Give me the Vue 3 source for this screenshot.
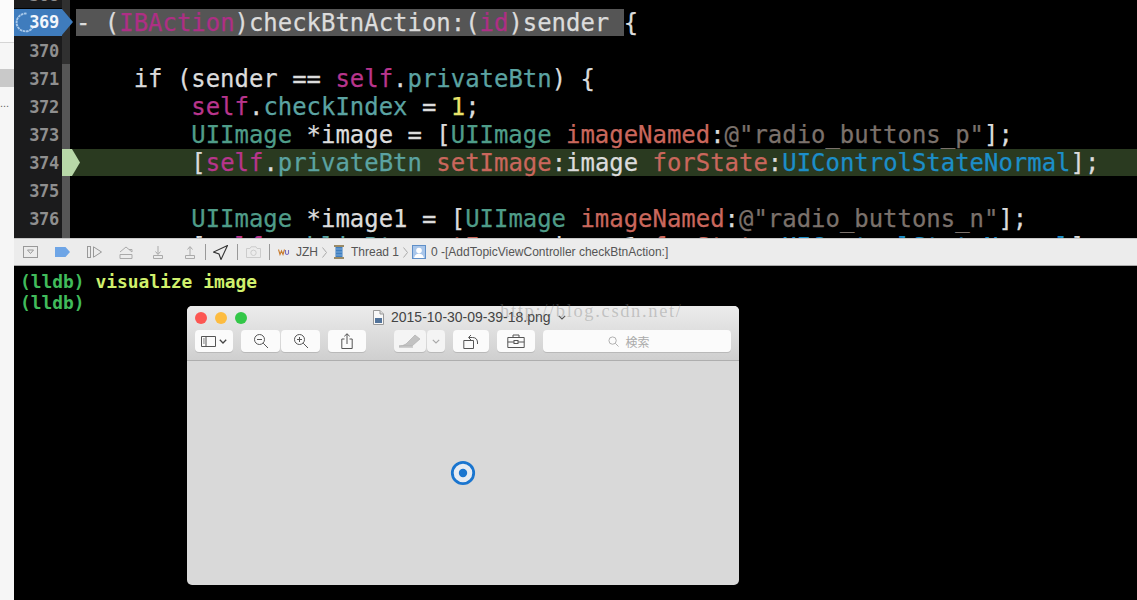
<script setup>
const plain = 'p', self = 's', prop = 't', cls = 'c', meth = 'm', str = 'g', kw = 'k', num = 'n', cnst = 'b'
const lines = [
  { no: 368, code: [] },
  { no: 369, sel: true, code: [[plain, '- ('], [kw, 'IBAction'], [plain, ')checkBtnAction:('], [kw, 'id'], [plain, ')sender ']], tail: '{' },
  { no: 370, code: [] },
  { no: 371, code: [[plain, '    if (sender == '], [self, 'self'], [plain, '.'], [prop, 'privateBtn'], [plain, ') {']] },
  { no: 372, code: [[plain, '        '], [self, 'self'], [plain, '.'], [prop, 'checkIndex'], [plain, ' = '], [num, '1'], [plain, ';']] },
  { no: 373, code: [[plain, '        '], [cls, 'UIImage'], [plain, ' *image = ['], [cls, 'UIImage'], [plain, ' '], [meth, 'imageNamed'], [plain, ':'], [str, '@"radio_buttons_p"'], [plain, '];']] },
  { no: 374, cur: true, code: [[plain, '        ['], [self, 'self'], [plain, '.'], [prop, 'privateBtn'], [plain, ' '], [meth, 'setImage'], [plain, ':image '], [meth, 'forState'], [plain, ':'], [cnst, 'UIControlStateNormal'], [plain, '];']] },
  { no: 375, code: [] },
  { no: 376, code: [[plain, '        '], [cls, 'UIImage'], [plain, ' *image1 = ['], [cls, 'UIImage'], [plain, ' '], [meth, 'imageNamed'], [plain, ':'], [str, '@"radio_buttons_n"'], [plain, '];']] },
  { no: 377, code: [[plain, '        ['], [self, 'self'], [plain, '.'], [prop, 'publicBtn'], [plain, ' '], [meth, 'setImage'], [plain, ':image1 '], [meth, 'forState'], [plain, ':'], [cnst, 'UIControlStateNormal'], [plain, '];']] }
]
</script>

<template>
  <div class="root">
    <aside class="nav">
      <div class="nav-a"></div>
      <div class="nav-b"></div>
      <div class="nav-sel"></div>
      <div class="nav-dots">...</div>
    </aside>
    <main class="main">
      <section class="editor">
        <div class="scroller">
          <div v-for="l in lines" :key="l.no" class="row" :class="{ cur: l.cur }">
            <div class="no" :class="{ bp: l.no === 369 }">
              <svg v-if="l.no === 369" class="spin" viewBox="0 0 20 20"><path d="M11 1.500A8.500 8.500 0 1 0 17.500 14" fill="none" stroke="#a9c9ea" stroke-width="1.800" stroke-dasharray="2.500 .6"/></svg>
              <span class="num">{{ l.no }}</span>
            </div>
            <div class="strip" :class="{ dark: l.no <= 370 }">
              <svg v-if="l.cur" class="pc" viewBox="0 0 18 28"><path d="M0 1H10L18 14.500L10 28H0Z" fill="#b8d8a8"/></svg>
            </div>
            <pre class="code"><span :class="{ selbg: l.sel }"><span v-for="(t, i) in l.code" :key="i" :class="t[0]">{{ t[1] }}</span></span><span v-if="l.tail" class="p">{{ l.tail }}</span></pre>
          </div>
        </div>
      </section>

      <nav class="bar">
        <svg class="ic w15" viewBox="0 0 15 12"><rect x=".5" y=".5" width="14" height="11" fill="none" stroke="#999"/><path d="M4.500 4h6L7.500 7.500Z" fill="none" stroke="#999"/></svg>
        <svg class="ic w15 g17" viewBox="0 0 15 10"><path d="M0 0H10.500L15 5L10.500 10H0Z" fill="#6ea5e6"/></svg>
        <svg class="ic w15 g17" viewBox="0 0 15 12"><rect x=".5" y=".5" width="3" height="11" fill="none" stroke="#999"/><path d="M6.500 .8L14.500 6L6.500 11.200Z" fill="none" stroke="#999"/></svg>
        <svg class="ic w14 g17" viewBox="0 0 14 13"><path d="M1 6L7 1L13 6M1 8.500H13V12.500H1ZM10 3.500H13V6" fill="none" stroke="#aaa"/></svg>
        <svg class="ic w14 g18" viewBox="0 0 14 13"><path d="M7 0V8M4.500 5.500L7 8.500L9.500 5.500M2.500 9.500H11.500V12.500H2.500Z" fill="none" stroke="#aaa"/></svg>
        <svg class="ic w14 g18" viewBox="0 0 14 13"><path d="M7 9V1M4.500 3.500L7 .5L9.500 3.500M2.500 9.500H11.500V12.500H2.500Z" fill="none" stroke="#aaa"/></svg>
        <i class="sep m8"></i>
        <svg class="ic w15 m7" viewBox="0 0 15 15"><path d="M14.500 .5L.5 7L6 9L8 14.500Z" fill="none" stroke="#333" stroke-width="1.100"/></svg>
        <i class="sep m9"></i>
        <svg class="ic w15 m8" viewBox="0 0 15 12"><path d="M.5 2.500H4L5 .8H10L11 2.500H14.500V11.500H.5Z" fill="none" stroke="#ccc"/><circle cx="7.500" cy="6.800" r="2.700" fill="none" stroke="#ccc"/></svg>
        <i class="sep m8"></i>
        <svg class="ic w12 m8" viewBox="0 0 12 8"><path d="M.5 1.500L2 6.500L3.500 3L5 6.500L6.500 1.500" fill="none" stroke="#c77a2c" stroke-width="1.100"/><path d="M7.500 2V5.500Q9 7.500 10.500 5.500V2" fill="none" stroke="#7a6fc0" stroke-width="1.100"/></svg>
        <span class="crumb m6">JZH</span>
        <svg class="chev m4" viewBox="0 0 5 11"><path d="M.5 .5L4.500 5.500L.5 10.500" fill="none" stroke="#aaa"/></svg>
        <svg class="ic w12 m6" viewBox="0 0 12 14"><rect x="2.500" y="1.500" width="7" height="11" fill="#3f7fc0"/><path d="M1 1H11M1 13H11" stroke="#9a8a66" stroke-width="2"/><path d="M2.500 4H9.500M2.500 7H9.500M2.500 10H9.500" stroke="#8db6e0" stroke-width=".8"/></svg>
        <span class="crumb m6">Thread 1</span>
        <svg class="chev m4" viewBox="0 0 5 11"><path d="M.5 .5L4.500 5.500L.5 10.500" fill="none" stroke="#aaa"/></svg>
        <svg class="ic w14 m4" viewBox="0 0 14 14"><rect x=".5" y=".5" width="13" height="13" fill="#a9c6ea" stroke="#5f8fc8"/><circle cx="7" cy="5.500" r="2.800" fill="#fff"/><path d="M2 13Q3 8.500 7 8.500T12 13Z" fill="#fff"/></svg>
        <span class="crumb m5">0 -[AddTopicViewController checkBtnAction:]</span>
      </nav>

      <section class="console">
        <div><span class="lldb">(lldb)</span> <span class="cmd">visualize image</span></div>
        <div><span class="lldb">(lldb)</span></div>

        <div class="window">
          <header class="chrome">
            <div class="title-row">
              <div class="lights"><i class="red"></i><i class="amber"></i><i class="green"></i></div>
              <div class="title">
                <svg class="doc" viewBox="0 0 11 15"><path d="M.5 .5H7L10.500 4V14.500H.5Z" fill="#f8f8f8" stroke="#999"/><path d="M7 .5V4H10.500" fill="#ddd" stroke="#999"/><rect x="2" y="8" width="7" height="5" fill="#52739a"/></svg>
                <span>2015-10-30-09-39-18.png</span>
                <svg class="caret" viewBox="0 0 8 5"><path d="M.8 .8L4 4L7.200 .8" fill="none" stroke="#555" stroke-width="1.100"/></svg>
              </div>
            </div>
            <div class="tools">
              <button class="btn b-side">
                <svg viewBox="0 0 15 11" width="15" height="11"><path d="M.5 .5H14.500V10.500H.5ZM5 .5V10.500" fill="none" stroke="#555"/><path d="M2 3H3.800M2 5H3.800M2 7H3.800" stroke="#777"/></svg>
                <svg viewBox="0 0 8 5" width="8" height="5"><path d="M.8 .8L4 4L7.200 .8" fill="none" stroke="#444" stroke-width="1.300"/></svg>
              </button>
              <div class="joined">
                <button class="btn b-zoom">
                  <svg viewBox="0 0 16 16" width="16" height="16"><circle cx="6.500" cy="6.500" r="5" fill="none" stroke="#555"/><path d="M4 6.500H9M10.200 10.200L15 15" stroke="#555" fill="none"/></svg>
                </button>
                <button class="btn b-zoom">
                  <svg viewBox="0 0 16 16" width="16" height="16"><circle cx="6.500" cy="6.500" r="5" fill="none" stroke="#555"/><path d="M4 6.500H9M6.500 4V9M10.200 10.200L15 15" stroke="#555" fill="none"/></svg>
                </button>
              </div>
              <button class="btn b-share">
                <svg viewBox="0 0 12 16" width="12" height="16"><path d="M3.500 6H.8V15.500H11.200V6H8.500M6 11V.8M3.300 3.300L6 .8L8.700 3.300" fill="none" stroke="#555"/></svg>
              </button>
              <div class="markup">
                <button class="btn b-pen">
                  <svg viewBox="0 0 24 14" width="24" height="14"><path d="M8 10L17 1L22 5L14 12H1Q5 12 8 10Z" fill="#c2c2c2" stroke="#aaa" stroke-width=".6"/><path d="M1 13H15" stroke="#aaa"/></svg>
                </button>
                <button class="btn b-more">
                  <svg viewBox="0 0 8 5" width="8" height="5"><path d="M.8 .8L4 4L7.200 .8" fill="none" stroke="#aaa" stroke-width="1.200"/></svg>
                </button>
              </div>
              <button class="btn b-rot">
                <svg viewBox="0 0 16 16" width="16" height="16"><path d="M.8 7.500H10.500V15.500H.8Z" fill="none" stroke="#555"/><path d="M6 4.500H9.500Q14 4.500 14.500 9V11M8 2L5.500 4.500L8 7" fill="none" stroke="#555"/></svg>
              </button>
              <button class="btn b-box">
                <svg viewBox="0 0 18 14" width="18" height="14"><path d="M.8 3.500H17.200V13.500H.8ZM.8 8H7M11 8H17.200M6 3.500V1H12V3.500" fill="none" stroke="#555"/><rect x="7" y="6.500" width="4" height="3" fill="none" stroke="#555"/></svg>
              </button>
              <div class="search">
                <svg viewBox="0 0 12 12" width="11" height="11"><circle cx="5" cy="5" r="4" fill="none" stroke="#aaa"/><path d="M8 8L11.500 11.500" stroke="#aaa"/></svg>
                <span>検索</span>
              </div>
            </div>
          </header>
          <div class="canvas">
            <svg viewBox="0 0 26 26" width="26" height="26">
              <circle cx="13" cy="13" r="10.700" fill="#e6ebf2" stroke="#1a75cf" stroke-width="2.800"/>
              <circle cx="13" cy="13" r="4.200" fill="#1a75cf"/>
            </svg>
          </div>
        </div>
        <div class="mark">http://blog.csdn.net/</div>
      </section>
    </main>
  </div>
</template>

<style>
html, body { margin: 0; background: #000; }
</style>

<style scoped>
.root { display: flex; width: 1137px; height: 600px; overflow: hidden; background: #000; }
.nav { width: 14px; flex: none; background: #f6f6f6; display: flex; flex-direction: column; }
.nav-a { height: 42px; background: #fbfbfb; border-bottom: 1px solid #d5d5d5; }
.nav-b { height: 26px; }
.nav-sel { height: 18px; background: #c9c9c9; }
.nav-dots { margin-top: 6px; font: 11px/20px "Liberation Sans", sans-serif; color: #666; }
.main { flex: 1; min-width: 0; display: flex; flex-direction: column; }
.editor { height: 238px; flex: none; overflow: hidden; }
.scroller { margin-top: -20px; }
.row { display: flex; height: 28px; }
.row.cur { background: linear-gradient(#2a3a20, #2a3a20) no-repeat 56px 1px / 100% 27px; }
.no { width: 48px; flex: none; position: relative; background: #1b1b1c; font: 700 17px/28px "DejaVu Sans Mono", monospace; color: #8f8f8f; text-align: right; box-sizing: border-box; padding: 1px 3px 0 0; }
.num { position: relative; letter-spacing: -.3px; }
.no.bp { background: #3f7cbd; color: #f2f6fb; height: 27px; margin-top: 1px; padding-top: 0; line-height: 27px; }
.no.bp::after { content: ""; position: absolute; left: 48px; top: 0; border-left: 11px solid #3f7cbd; border-top: 13.500px solid transparent; border-bottom: 13.500px solid transparent; z-index: 2; }
.spin { position: absolute; left: 1px; top: 3px; width: 21px; height: 21px; }
.strip { width: 8px; flex: none; background: #565656; position: relative; }
.strip.dark { background: #303030; }
.pc { position: absolute; left: 0; top: 0; width: 18px; height: 28px; z-index: 1; }
.code { margin: 0 0 0 6px; padding-top: 1px; font: 23.950px/28px "DejaVu Sans Mono", monospace; white-space: pre; color: #dcdcdc; -webkit-text-stroke: .25px; }
.selbg { background: #555; display: inline-block; height: 27px; }
.p { color: #dcdcdc; }
.s { color: #b8358c; }
.t { color: #5ba3a2; }
.c { color: #4f9c88; }
.m { color: #c9675c; }
.g { color: #7b716b; }
.k { color: #ae2f85; }
.n { color: #e9e36a; }
.b { color: #1c8ec9; }

.bar { height: 28px; flex: none; box-sizing: border-box; display: flex; align-items: center; padding-left: 9px; background: #ececec; border-top: 1px solid #c8c8c8; border-bottom: 1px solid #a9a9a9; }
.ic { flex: none; display: block; }
.w15 { width: 15px; }
.w14 { width: 14px; }
.w12 { width: 12px; }
.g17 { margin-left: 17px; }
.g18 { margin-left: 18px; }
.m4 { margin-left: 4px; }
.m5 { margin-left: 5px; }
.m6 { margin-left: 6px; }
.m7 { margin-left: 7px; }
.m8 { margin-left: 8px; }
.m9 { margin-left: 9px; }
.sep { display: block; width: 1px; height: 16px; background: #999; flex: none; }
.crumb { font: 12px "Liberation Sans", sans-serif; color: #555; white-space: pre; flex: none; }
.chev { width: 5px; height: 11px; flex: none; }

.console { flex: 1; position: relative; padding: 5px 0 0 6px; font: 700 17.900px/21px "DejaVu Sans Mono", monospace; }
.lldb { color: #41bb5b; }
.cmd { color: #d0f06c; }
.window { position: absolute; left: 173px; top: 40px; width: 552px; height: 279px; border-radius: 5px; overflow: hidden; display: flex; flex-direction: column; background: #d9d9d9; }
.chrome { height: 55px; flex: none; box-sizing: border-box; background: linear-gradient(#ececec, #cfcfcf); border-bottom: 1px solid #aeaeae; padding: 0 8px; }
.title-row { height: 24px; display: flex; align-items: center; position: relative; }
.lights { display: flex; gap: 8px; }
.lights i { display: block; width: 12px; height: 12px; border-radius: 50%; }
.red { background: #fc5753; }
.amber { background: #fdbc40; }
.green { background: #33c748; }
.title { position: absolute; left: 178px; top: 2px; display: flex; align-items: center; gap: 7px; font: 14px/18px "Liberation Sans", sans-serif; color: #444; white-space: nowrap; }
.doc { width: 11px; height: 15px; }
.caret { width: 8px; height: 5px; }
.tools { display: flex; align-items: center; height: 22px; }
.btn { display: flex; align-items: center; justify-content: center; height: 22px; padding: 0; border: 0; border-radius: 4px; background: #fbfbfb; box-shadow: 0 1px 0 #b9b9b9; flex: none; box-sizing: border-box; }
.b-side { width: 38px; gap: 3px; }
.joined { display: flex; gap: 1px; margin-left: 8px; }
.b-zoom { width: 39px; }
.b-share { width: 38px; margin-left: 8px; }
.markup { display: flex; gap: 1px; margin-left: 28px; }
.b-pen { width: 32px; background: #f4f4f4; }
.b-more { width: 18px; background: #f4f4f4; }
.b-rot { width: 36px; margin-left: 8px; }
.b-box { width: 38px; margin-left: 8px; }
.search { width: 188px; height: 22px; margin-left: 8px; box-sizing: border-box; padding-right: 16px; border-radius: 4px; background: #fbfbfb; box-shadow: 0 1px 0 #b9b9b9; display: flex; align-items: center; justify-content: center; gap: 6px; font: 12px "Noto Sans CJK JP", sans-serif; color: #aaa; }
.canvas { flex: 1; display: flex; align-items: center; justify-content: center; }
.mark { position: absolute; left: 486px; top: 33px; font: 18.500px/24px "Liberation Serif", serif; letter-spacing: 1.650px; color: rgba(130, 130, 130, .38); white-space: nowrap; pointer-events: none; }
</style>
